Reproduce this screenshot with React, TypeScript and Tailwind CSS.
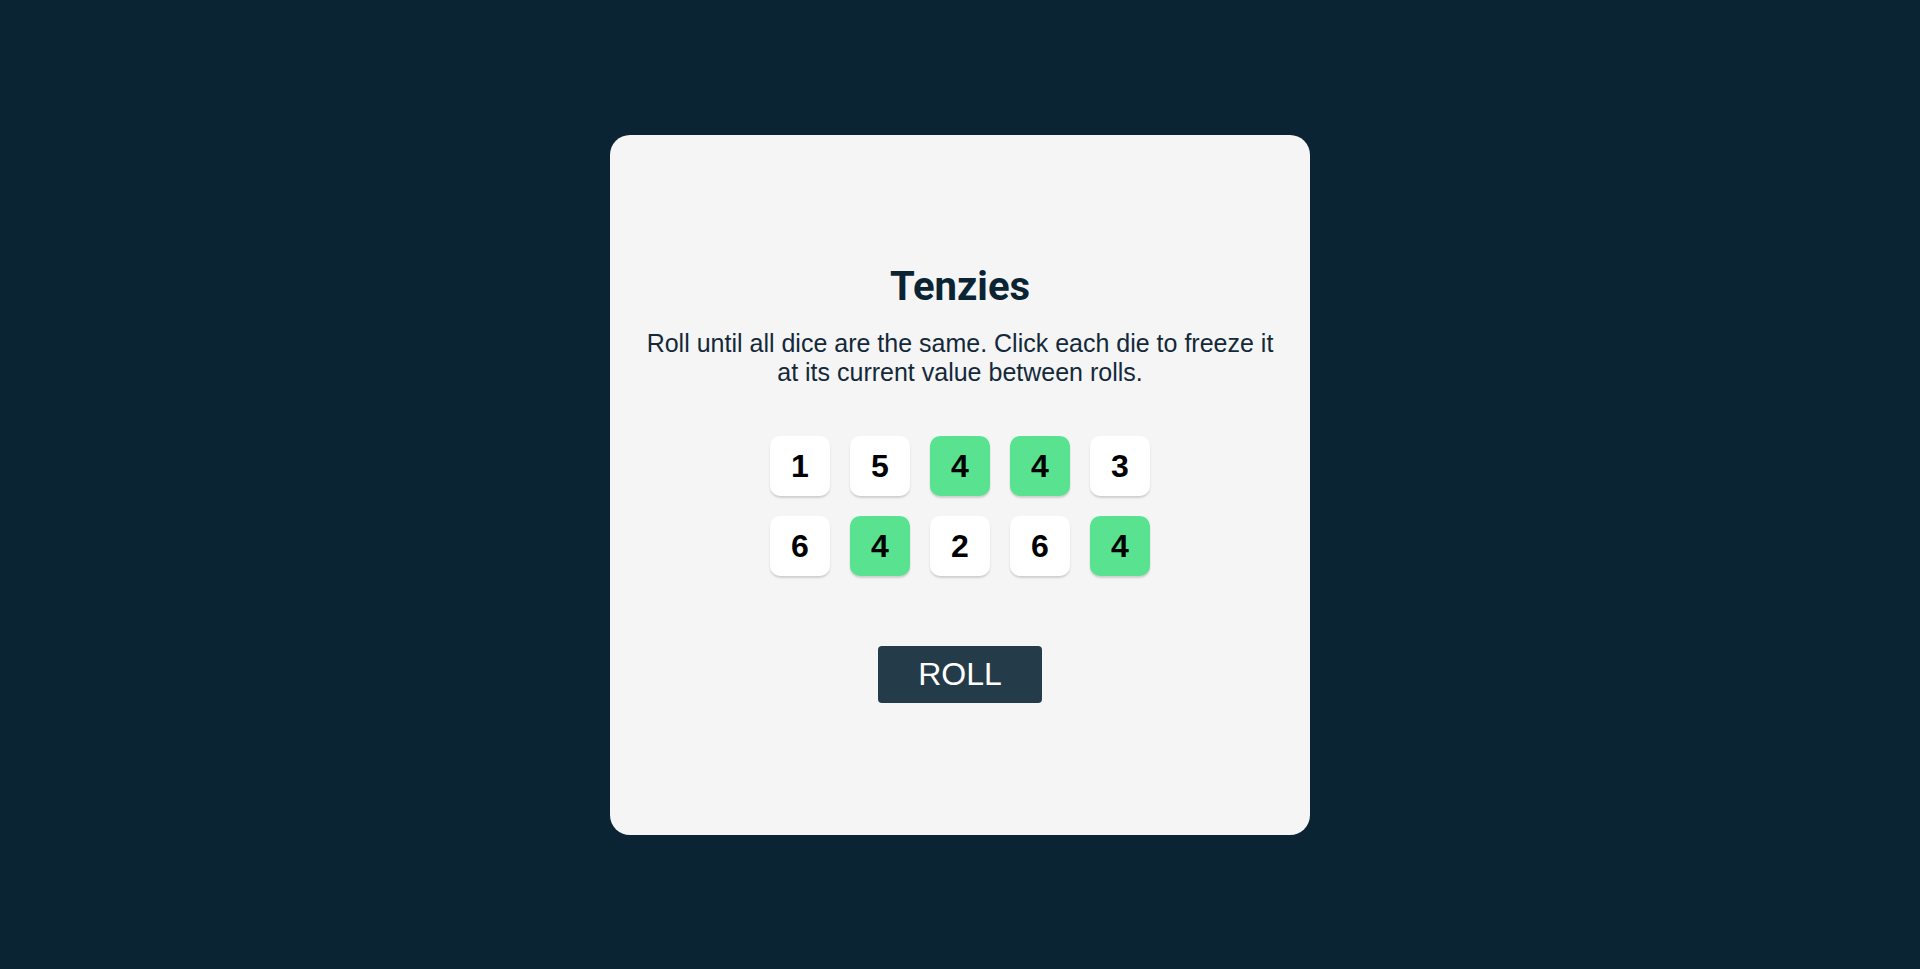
import React, { useState } from 'react';

type Die = { id: number; value: number; isHeld: boolean };

const START: Die[] = [
    { id: 1, value: 1, isHeld: false },
    { id: 2, value: 5, isHeld: false },
    { id: 3, value: 4, isHeld: true },
    { id: 4, value: 4, isHeld: true },
    { id: 5, value: 3, isHeld: false },
    { id: 6, value: 6, isHeld: false },
    { id: 7, value: 4, isHeld: true },
    { id: 8, value: 2, isHeld: false },
    { id: 9, value: 6, isHeld: false },
    { id: 10, value: 4, isHeld: true },
];

export default function App() {
    const [dice, setDice] = useState<Die[]>(START);

    const holdDie = (id: number) => {
        setDice(prev => prev.map(d => (d.id === id ? { ...d, isHeld: !d.isHeld } : d)));
    };

    const rollDice = () => {
        setDice(prev => prev.map(d => (d.isHeld ? d : { ...d, value: Math.ceil(Math.random() * 6) })));
    };

    return (
        <div className="min-h-screen w-full bg-[#0B2434] flex items-center justify-center">
            <main className="w-[700px] h-[700px] pb-[3px] bg-[#F5F5F5] rounded-[20px] flex flex-col items-center justify-center">
                <h1 className="text-[40px] font-bold leading-[normal] text-[#0B2434] font-['Roboto',sans-serif]">Tenzies</h1>
                <p className="mt-[19px] w-[640px] text-center text-[25px] leading-[normal] text-[#13293a] font-['Liberation_Sans',Arial,sans-serif]">
                    Roll until all dice are the same. Click each die to freeze it at its current value between rolls.
                </p>
                <div className="mt-[49px] grid grid-cols-5 gap-5">
                    {dice.map(d => (
                        <button
                            key={d.id}
                            onClick={() => holdDie(d.id)}
                            className={`w-[60px] h-[60px] rounded-[10px] shadow-[0px_2px_2px_rgba(0,0,0,0.15)] flex items-center justify-center text-[32px] leading-[normal] font-bold text-black font-['Liberation_Sans',Arial,sans-serif] ${d.isHeld ? 'bg-[#59E391]' : 'bg-white'}`}
                        >
                            {d.value}
                        </button>
                    ))}
                </div>
                <button
                    onClick={rollDice}
                    className="mt-[70px] px-10 py-2.5 bg-[#243B4A] text-white text-[32px] leading-[normal] rounded-[4px] font-['Liberation_Sans',Arial,sans-serif]"
                >
                    ROLL
                </button>
            </main>
        </div>
    );
}
